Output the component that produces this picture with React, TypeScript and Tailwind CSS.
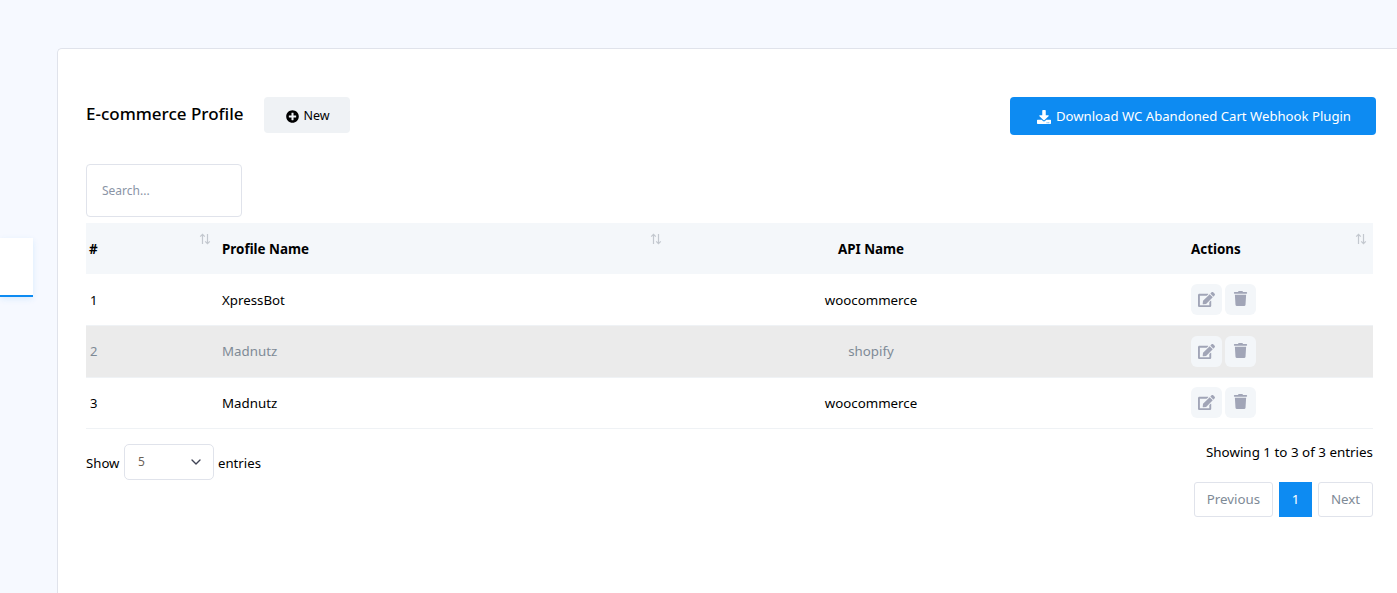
import { FaDownload, FaEdit, FaPlusCircle, FaTrash } from "react-icons/fa";
import { ChevronDown } from "lucide-react";

const ROWS = [
  { id: 1, name: "XpressBot", api: "woocommerce" },
  { id: 2, name: "Madnutz", api: "shopify" },
  { id: 3, name: "Madnutz", api: "woocommerce" },
];

function SortIcon() {
  return (
    <svg width="12" height="12" viewBox="0 0 12 12" fill="none" stroke="#c3c8cf" strokeWidth="1.2">
      <path d="M3.5 11V1.5M1.2 3.7 3.5 1.4l2.3 2.3" />
      <path d="M8.5 1v9.5M6.2 8.3l2.3 2.3 2.3-2.3" />
    </svg>
  );
}

function ActionButton({ children }: { children: React.ReactNode }) {
  return (
    <button className="flex h-[31px] w-[31px] items-center justify-center rounded-md bg-[#f3f6f9] text-[#a1a5b7]">
      {children}
    </button>
  );
}

export default function App() {
  return (
    <div className="flex h-[593px] overflow-hidden bg-[#f6f9ff] font-['Noto_Sans','Open_Sans',sans-serif] text-[13px] text-black">
      <aside className="w-[57px] shrink-0 pt-[238px]">
        <div className="h-[59px] w-[33px] border-b-2 border-[#0d8bf2] bg-white shadow-[0_2px_6px_rgba(13,139,242,0.12)]" />
      </aside>

      <main className="mt-[48px] min-w-0 flex-1 rounded-tl-[5px] border-t border-l border-[#e0e3eb] bg-white pt-[48px] pl-[28px]">
        <div className="flex w-[1290px] items-start">
          <h1 className="mt-[4px] text-[17px] leading-[25px] font-medium">E-commerce Profile</h1>
          <button className="ml-[20px] flex h-[36px] w-[86px] items-center justify-center gap-[5px] rounded-[4px] bg-[#eff2f5] pt-[2px] pl-[2px] text-[12.5px]">
            <FaPlusCircle className="h-[13px] w-[13px]" />
            New
          </button>
          <button className="ml-auto flex h-[38px] w-[366px] items-center justify-center gap-[5px] rounded-[4px] bg-[#0d8bf2] pt-[2px] pl-[2px] text-[13.15px] text-white">
            <FaDownload className="h-[14px] w-[14px]" />
            Download WC Abandoned Cart Webhook Plugin
          </button>
        </div>

        <input
          placeholder="Search..."
          className="mt-[29px] block h-[53px] w-[156px] rounded-[4px] border border-[#e0e3eb] px-[15px] text-[12px] placeholder:text-[#8a94a6] focus:outline-none"
        />

        <table className="mt-[6px] w-[1287px] table-fixed border-collapse">
          <thead>
            <tr className="h-[51px] bg-[#f4f7fa] text-[13.4px]">
              <th className="relative w-[136px] pt-[2px] pl-[3px] text-left font-bold">
                #
                <span className="absolute top-[10px] right-[11px]"><SortIcon /></span>
              </th>
              <th className="relative w-[449px] pt-[2px] text-left font-bold">
                Profile Name
                <span className="absolute top-[10px] right-[9px]"><SortIcon /></span>
              </th>
              <th className="w-[400px] pt-[2px] text-center font-bold">API Name</th>
              <th className="relative pt-[2px] pl-[120px] text-left font-bold">
                Actions
                <span className="absolute top-[10px] right-[6px]"><SortIcon /></span>
              </th>
            </tr>
          </thead>
          <tbody>
            {ROWS.map((row) => {
              const shaded = row.id === 2;
              return (
                <tr
                  key={row.id}
                  className={`h-[51.5px] border-b border-[#eff2f5] ${shaded ? "bg-[#ebebeb] text-[#7e8a96]" : ""}`}
                >
                  <td className={`pl-[4px] ${shaded ? "pt-0" : "pt-[2px]"}`}>{row.id}</td>
                  <td className={`text-[13.3px] ${shaded ? "pt-px" : "pt-[2px]"}`}>{row.name}</td>
                  <td className="pt-[2px] text-center text-[13.3px]">{row.api}</td>
                  <td className="pl-[120px]">
                    <div className="flex gap-[3px]">
                      <ActionButton><FaEdit className="h-[17px] w-[17px]" /></ActionButton>
                      <ActionButton><FaTrash className="mb-[2px] h-[15px] w-[15px]" /></ActionButton>
                    </div>
                  </td>
                </tr>
              );
            })}
          </tbody>
        </table>

        <div className="flex w-[1287px] items-start justify-between">
          <div className="mt-[15px] flex items-center gap-[4px] text-[13.2px]">
            <span className="w-[34px] pt-[3px]">Show</span>
            <div className="flex h-[36px] w-[90px] items-center justify-between rounded-[5px] border border-[#e0e3eb] pr-[9px] pl-[13px] text-[12px] text-[#6b6257]">
              5
              <ChevronDown className="h-[16px] w-[16px] text-[#3f4254]" />
            </div>
            <span className="pt-[3px]">entries</span>
          </div>
          <div className="flex flex-col items-end">
            <div className="mt-[14px] text-[13.4px] leading-[19px]">Showing 1 to 3 of 3 entries</div>
            <div className="mt-[20px] flex gap-[6px] text-[13.3px] text-[#7e8a96]">
              <button className="h-[35px] w-[79px] rounded-[3px] border border-[#e0e3eb]">Previous</button>
              <button className="h-[35px] w-[33px] bg-[#0d8bf2] text-white">1</button>
              <button className="h-[35px] w-[55px] rounded-[3px] border border-[#e0e3eb]">Next</button>
            </div>
          </div>
        </div>
      </main>
    </div>
  );
}
